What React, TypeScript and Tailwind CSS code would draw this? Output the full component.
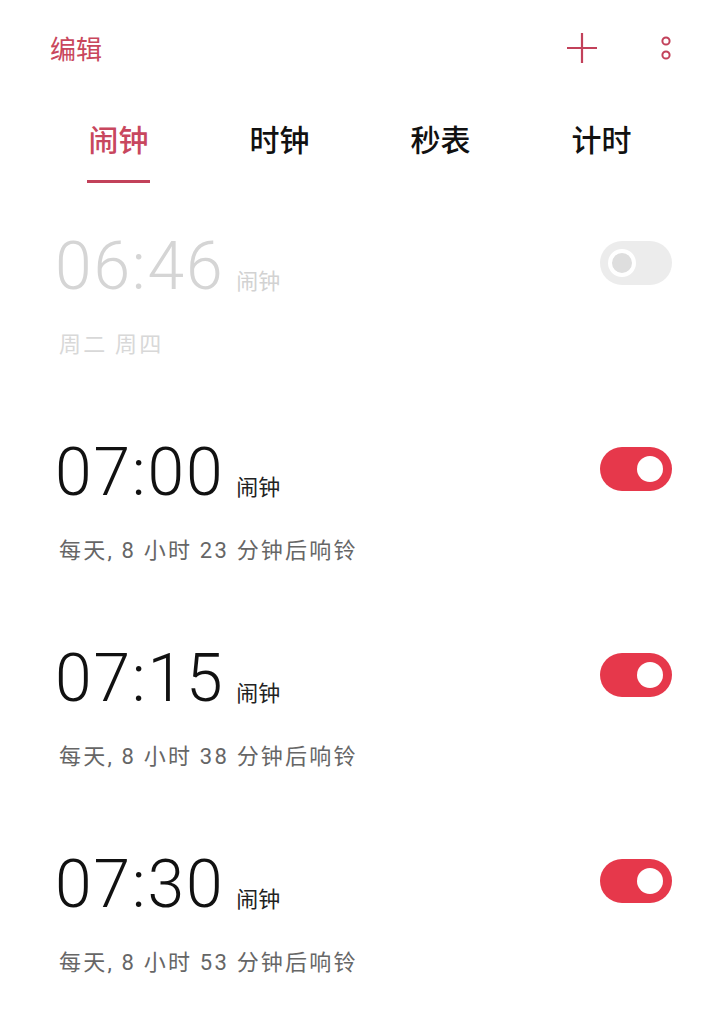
import React from 'react';

type Alarm = {
  time: string;
  note: string;
  on: boolean;
};

const alarms: Alarm[] = [
  { time: '06:46', note: '周二 周四', on: false },
  { time: '07:00', note: '每天, 8 小时 23 分钟后响铃', on: true },
  { time: '07:15', note: '每天, 8 小时 38 分钟后响铃', on: true },
  { time: '07:30', note: '每天, 8 小时 53 分钟后响铃', on: true },
];

const tabs = ['闹钟', '时钟', '秒表', '计时'];

const cjk = "font-['Roboto','Noto_Sans_CJK_SC',sans-serif]";

const Toggle: React.FC<{ on: boolean }> = ({ on }) =>
  on ? (
    <div className="w-[72px] h-[44px] rounded-full bg-[#e6384b] flex items-center justify-end pr-[9px]">
      <div className="w-[26px] h-[26px] rounded-full bg-white" />
    </div>
  ) : (
    <div className="w-[72px] h-[44px] rounded-full bg-[#ececec] flex items-center pl-[8px]">
      <div className="w-[28px] h-[28px] rounded-full border-[4px] border-white bg-[#dedede]" />
    </div>
  );

export default function App() {
  return (
    <div className={`w-[720px] h-[1029px] bg-white overflow-hidden ${cjk}`}>
      {/* top bar */}
      <div className="h-[96px] flex items-center pl-[50px] pr-[44px]">
        <span className="mt-[4px] text-[26px] text-[#c9475c] leading-none">编辑</span>
        <div className="ml-auto flex items-center gap-[58px]">
          <svg width="32" height="32" viewBox="0 0 32 32" className="text-[#c2415a]">
            <path d="M16 1v30M1 16h30" stroke="currentColor" strokeWidth="2.2" fill="none" />
          </svg>
          <svg width="20" height="32" viewBox="0 0 20 32" className="text-[#c2415a]">
            <circle cx="10" cy="9" r="3.6" stroke="currentColor" strokeWidth="2" fill="none" />
            <circle cx="10" cy="23" r="3.6" stroke="currentColor" strokeWidth="2" fill="none" />
          </svg>
        </div>
      </div>

      {/* tabs */}
      <div className="pt-[21px] px-[38px] grid grid-cols-4 h-[98px]">
        {tabs.map((t, i) => (
          <div key={t} className="flex flex-col items-center">
            <span
              className={`h-[48px] leading-[48px] text-[30px] font-medium ${
                i === 0 ? 'text-[#c8475e]' : 'text-[#111]'
              }`}
            >
              {t}
            </span>
            {i === 0 && <div className="mt-[15px] w-[63px] h-[3px] bg-[#c2415a]" />}
          </div>
        ))}
      </div>

      {/* alarms */}
      <div>
        {alarms.map((a) => (
          <div key={a.time} className="h-[206px] pt-[40px] pl-[55px] pr-[48px] flex justify-between">
            <div className="flex flex-col">
              <div className="flex items-baseline h-[66px]">
                <span
                  className={`font-['Roboto',sans-serif] font-light tracking-[1.8px] text-[66px] leading-[66px] ${
                    a.on ? 'text-[#111]' : 'text-[#d5d5d5]'
                  }`}
                >
                  {a.time}
                </span>
                <span className={`ml-[12px] text-[22px] ${a.on ? 'text-[#222]' : 'text-[#d2d2d2]'}`}>闹钟</span>
              </div>
              <div
                className={`mt-[28px] pl-[4px] text-[22px] tracking-[2.2px] leading-[33px] ${
                  a.on ? 'text-[#666]' : 'text-[#d8d8d8]'
                }`}
              >
                {a.note}
              </div>
            </div>
            <div className="mt-[7px]">
              <Toggle on={a.on} />
            </div>
          </div>
        ))}
      </div>
    </div>
  );
}
